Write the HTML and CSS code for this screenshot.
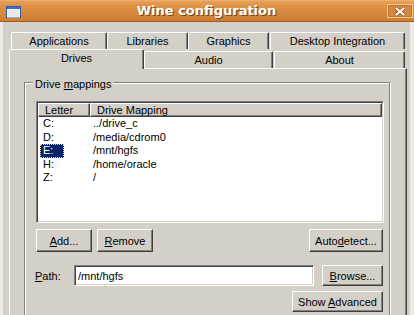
FILE: index.html
```html
<!doctype html>
<html>
	<head>
		<title>Wine configuration</title>
		<meta charset="utf-8">
		<link rel="stylesheet" href="styles.css">
	</head>
	<body>
		<div class="window">
			<div class="titlebar">
				<svg class="winicon" width="15" height="12" viewBox="0 0 15 12">
					<rect x="0.5" y="0.5" width="14" height="11" fill="#e6e8eb" stroke="#2b5aa8"/>
					<rect x="1" y="1" width="13" height="2" fill="#3c70c2"/>
					<rect x="1.5" y="3.5" width="12" height="7.5" fill="none" stroke="#f6f7f8"/>
				</svg>
				<span class="title">Wine configuration</span>
				<span class="close">
					<svg width="10" height="9" viewBox="0 0 10 9">
						<path d="M1.5 1.5 L8.5 7.5 M8.5 1.5 L1.5 7.5" stroke="#8a4e18" stroke-width="3.4" stroke-linecap="square"/>
						<path d="M1.5 1.5 L8.5 7.5 M8.5 1.5 L1.5 7.5" stroke="#fff" stroke-width="2" stroke-linecap="square"/>
					</svg>
				</span>
			</div>
			<div class="frame">
				<div class="tabrow back">
					<span class="tab t-apps">Applications</span>
					<span class="tab t-libs">Libraries</span>
					<span class="tab t-graphics">Graphics</span>
					<span class="tab t-desktop">Desktop Integration</span>
				</div>
				<div class="tabrow front">
					<span class="tab active t-drives">Drives</span>
					<span class="tab t-audio">Audio</span>
					<span class="tab t-about">About</span>
				</div>
				<div class="pane">
					<fieldset class="group">
						<legend>Drive <u>m</u>appings</legend>
						<div class="list">
							<div class="list-head">
								<span class="head-cell col-letter">Letter</span>
								<span class="head-cell col-map">Drive Mapping</span>
							</div>
							<div class="list-row"><span class="col-letter"><span class="letter">C:</span></span><span class="col-map">../drive_c</span></div>
							<div class="list-row"><span class="col-letter"><span class="letter">D:</span></span><span class="col-map">/media/cdrom0</span></div>
							<div class="list-row"><span class="col-letter"><span class="letter selected">E:</span></span><span class="col-map">/mnt/hgfs</span></div>
							<div class="list-row"><span class="col-letter"><span class="letter">H:</span></span><span class="col-map">/home/oracle</span></div>
							<div class="list-row"><span class="col-letter"><span class="letter">Z:</span></span><span class="col-map">/</span></div>
						</div>
						<div class="button-row">
							<button class="btn b-add"><u>A</u>dd...</button>
							<button class="btn b-remove"><u>R</u>emove</button>
							<button class="btn b-auto">Auto<u>d</u>etect...</button>
						</div>
						<div class="path-row">
							<label class="path-label"><u>P</u>ath:</label>
							<input class="path-field" type="text" value="/mnt/hgfs" readonly>
							<button class="btn b-browse"><u>B</u>rowse...</button>
						</div>
						<div class="adv-row">
							<button class="btn b-adv">Show <u>A</u>dvanced</button>
						</div>
					</fieldset>
				</div>
			</div>
		</div>
	</body>
</html>
```

FILE: styles.css
```css
* {
	margin: 0;
	padding: 0;
	box-sizing: border-box;
}
html, body {
	background-color: #d4d0c8;
}
body {
	font-family: "Liberation Sans", Arial, sans-serif;
	font-size: 11px;
	color: #000;
}
u {
	text-decoration: underline;
	text-underline-offset: 1px;
}
.window {
	width: 414px;
	height: 315px;
	overflow: hidden;
	display: flex;
	flex-direction: column;
}

/* title bar */
.titlebar {
	flex: none;
	height: 22px;
	display: flex;
	align-items: flex-start;
	background: linear-gradient(to bottom, #efb277 0, #e49b52 2px, #d98b3f 50%, #cd7e33 100%);
	border-bottom: 1px solid #9a5a20;
}
.winicon {
	flex: none;
	margin: 6px 0 0 6px;
}
.title {
	flex: 1;
	padding-left: 5px;
	text-align: center;
	font-family: "DejaVu Sans", sans-serif;
	font-weight: bold;
	font-size: 13px;
	line-height: 21px;
	color: #fff;
	text-shadow: 1px 1px 0 #7a4212;
}
.close {
	flex: none;
	width: 26px;
	height: 14px;
	margin: 4px 1px 0 0;
	display: flex;
	align-items: center;
	justify-content: center;
	border: 1px solid #f4c894;
	box-shadow: inset 0 0 0 1px #c57631;
	background: #d5883d;
}

/* window body */
.frame {
	flex: 1;
	display: flex;
	flex-direction: column;
	border-left: 3px solid #edebe8;
	border-right: 4px solid #edebe8;
	padding: 10px 3px 0 6px;
}
.tabrow {
	flex: none;
	display: flex;
	align-items: flex-end;
}
.tabrow.back {
	height: 17px;
	margin-left: 2px;
}
.tabrow.front {
	height: 19px;
}
.tab {
	flex: none;
	height: 17px;
	border: 1px solid #fff;
	border-bottom: 0;
	border-right-color: #404040;
	border-radius: 2px 2px 0 0;
	box-shadow: inset -1px 0 0 #808080;
	background: #d4d0c8;
	text-align: center;
	line-height: 16px;
	white-space: nowrap;
}
.tab.active {
	height: 20px;
	margin-bottom: -1px;
	position: relative;
	z-index: 1;
}
.t-apps { width: 96px; }
.t-libs { width: 81px; }
.t-graphics { width: 81px; }
.t-desktop { width: 135px; margin-left: 1px; }
.t-drives { width: 135px; }
.t-audio { width: 129px; }
.t-about { width: 131px; margin-left: 1px; }

.pane {
	flex: 1;
	border: 1px solid #fff;
	border-bottom: 0;
	border-right-color: #404040;
	box-shadow: inset -1px 0 0 #808080;
	padding: 5px 16px 0 14px;
}

/* group box */
.group {
	min-width: 0;
	border: 1px solid #808080;
	box-shadow: inset 1px 1px 0 #fff, 1px 1px 0 #fff;
	padding: 10px 5px 20px 11px;
}
.group legend {
	margin-left: -3px;
	padding: 4px 2px 0;
	line-height: 13px;
	background: #d4d0c8;
}

/* list view */
.list {
	height: 122px;
	padding: 1px;
	background: #fff;
	border: 1px solid;
	border-color: #808080 #fff #fff #808080;
	box-shadow: inset 1px 1px 0 #404040, inset -1px -1px 0 #d4d0c8;
}
.list-head {
	display: flex;
	height: 14px;
}
.head-cell {
	border: 1px solid;
	border-color: #fff #404040 #404040 #fff;
	box-shadow: inset -1px -1px 0 #808080;
	background: #d4d0c8;
	padding-left: 6px;
	line-height: 12px;
}
.head-cell.col-letter {
	width: 52px;
	flex: none;
}
.head-cell.col-map {
	flex: 1;
}
.list-row {
	display: flex;
	height: 13.5px;
	line-height: 13.5px;
}
.list-row .col-letter {
	width: 52px;
	flex: none;
	padding-left: 2px;
}
.list-row .col-map {
	padding-left: 3px;
}
.letter {
	display: inline-block;
	width: 24px;
	padding-left: 3px;
}
.letter.selected {
	background: #0a246a;
	color: #fff;
	outline: 1px dotted #e6d98a;
	outline-offset: -1px;
}

/* buttons */
.btn {
	font: inherit;
	color: #000;
	height: 23px;
	border: 1px solid;
	border-color: #fff #404040 #404040 #fff;
	box-shadow: inset -1px -1px 0 #808080;
	background: #d4d0c8;
	text-align: center;
	white-space: nowrap;
}
.button-row {
	display: flex;
	gap: 5px;
	margin-top: 6px;
}
.b-add, .b-remove {
	width: 56px;
}
.b-auto {
	width: 74px;
	margin-left: auto;
	margin-right: 1px;
}
.path-row {
	display: flex;
	align-items: center;
	height: 21px;
	margin-top: 13px;
}
.path-label {
	width: 39px;
	margin-left: -1px;
}
.path-field {
	width: 240px;
	height: 21px;
	font: inherit;
	color: #000;
	padding-left: 3px;
	background: #fff;
	border: 1px solid;
	border-color: #808080 #fff #fff #808080;
	box-shadow: inset 1px 1px 0 #404040, inset -1px -1px 0 #d4d0c8;
	outline: none;
}
.b-browse {
	width: 61px;
	height: 21px;
	margin-left: auto;
	margin-right: 1px;
}
.adv-row {
	display: flex;
	justify-content: flex-end;
	margin-top: 5px;
}
.b-adv {
	width: 91px;
	height: 21px;
	margin-right: 1px;
}
```
